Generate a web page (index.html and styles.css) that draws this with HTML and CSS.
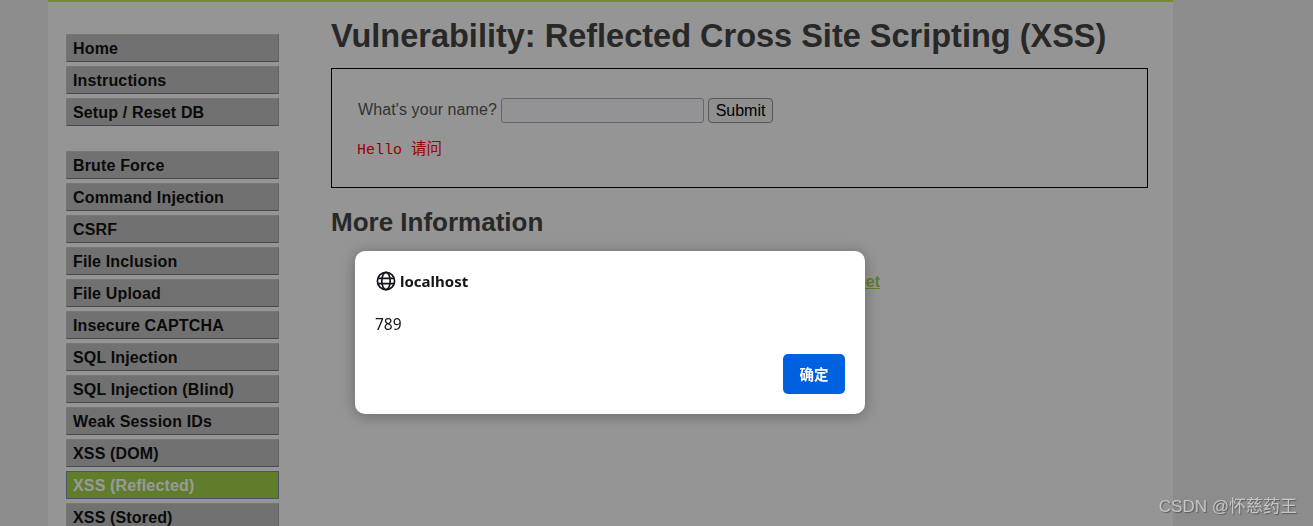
FILE: index.html
```html
<!DOCTYPE html>
<html lang="en">
<head>
    <meta charset="UTF-8">
    <meta name="viewport" content="width=device-width, initial-scale=1.0">
    <title>Vulnerability: Reflected Cross Site Scripting (XSS)</title>
    <link rel="stylesheet" href="styles.css">
</head>
<body>
    <div class="container">
        <div class="sidebar">
            <ul class="menu-block">
                <li><a href="#">Home</a></li>
                <li><a href="#">Instructions</a></li>
                <li><a href="#">Setup / Reset DB</a></li>
            </ul>
            <ul class="menu-block">
                <li><a href="#">Brute Force</a></li>
                <li><a href="#">Command Injection</a></li>
                <li><a href="#">CSRF</a></li>
                <li><a href="#">File Inclusion</a></li>
                <li><a href="#">File Upload</a></li>
                <li><a href="#">Insecure CAPTCHA</a></li>
                <li><a href="#">SQL Injection</a></li>
                <li><a href="#">SQL Injection (Blind)</a></li>
                <li><a href="#">Weak Session IDs</a></li>
                <li><a href="#">XSS (DOM)</a></li>
                <li class="selected"><a href="#">XSS (Reflected)</a></li>
                <li><a href="#">XSS (Stored)</a></li>
            </ul>
        </div>

        <div class="main">
            <h1>Vulnerability: Reflected Cross Site Scripting (XSS)</h1>
            <div class="vulnerable-code">
                <form class="name-form">
                    <label for="name-input">What's your name?</label>
                    <input type="text" id="name-input">
                    <button type="button" class="submit-btn">Submit</button>
                </form>
                <pre class="result">Hello <span class="result-cjk">请问</span></pre>
            </div>
            <h2>More Information</h2>
            <ul class="info-links">
                <li><a href="#">https://owasp.org/www-community/xss-filter-evasion-cheatsheet</a></li>
            </ul>
        </div>
    </div>

    <div class="overlay"></div>

    <div class="dialog">
        <div class="dialog-title">
            <svg class="globe" width="20" height="20" viewBox="0 0 20 20" fill="none" stroke="#15141a" stroke-width="1.7">
                <circle cx="10" cy="10" r="8.6"/>
                <ellipse cx="10" cy="10" rx="4.2" ry="8.6"/>
                <path d="M1.8 7.3h16.4M1.8 12.7h16.4"/>
            </svg>
            <span>localhost</span>
        </div>
        <div class="dialog-message">789</div>
        <div class="dialog-actions">
            <button type="button" class="ok-btn">确定</button>
        </div>
    </div>

    <div class="watermark">CSDN @怀慈药王</div>
</body>
</html>
```

FILE: styles.css
```css
html, body {
    height: 100%;
}

body {
    margin: 0;
    overflow: hidden;
    background-color: #e9e9e9;
    font-family: "Liberation Sans", Arial, sans-serif;
    font-size: 16px;
    color: #555;
}

.container {
    display: flex;
    width: 1125px;
    height: 100%;
    margin-left: 48px;
    background-color: #f8f8f9;
    border-top: 2px solid #c5ec4f;
    box-sizing: border-box;
}

.sidebar {
    width: 283px;
    padding: 32px 0 0 18px;
    box-sizing: border-box;
    flex-shrink: 0;
}

.menu-block {
    list-style: none;
    margin: 0 0 25px 0;
    padding: 0;
}

.menu-block li {
    margin-bottom: 4px;
}

.menu-block a {
    display: block;
    width: 213px;
    height: 28px;
    padding-left: 6px;
    box-sizing: border-box;
    background-color: #bcbcbc;
    border: 1px solid #c6c6c6;
    border-bottom-color: #7c7c8c;
    border-right-color: #a6a6ae;
    font-weight: bold;
    letter-spacing: 0.15px;
    line-height: 27px;
    color: #111;
    text-decoration: none;
}

.menu-block .selected a {
    background-color: #a0d048;
    border-color: #7f8ca8;
    color: #fff;
}

.main {
    width: 817px;
}

.main h1 {
    margin: 16px 0 0 0;
    font-size: 32.5px;
    line-height: 37px;
    font-weight: bold;
    white-space: nowrap;
    color: #444;
}

.vulnerable-code {
    height: 120px;
    margin-top: 13px;
    padding: 29px 26px 0 26px;
    box-sizing: border-box;
    border: 1px solid #000;
}

.name-form {
    display: flex;
    align-items: center;
    height: 25px;
    gap: 4px;
}

.name-form label {
    margin-bottom: 2px;
    letter-spacing: 0.1px;
}

.name-form input {
    width: 203px;
    height: 25px;
    padding: 0 2px;
    box-sizing: border-box;
    background-color: #f6f6fb;
    border: 1px solid #a8a8b4;
    border-radius: 3px;
}

.submit-btn {
    width: 65px;
    height: 25px;
    padding: 0;
    background-color: #efefef;
    border: 1px solid #8f8f9d;
    border-radius: 4px;
    font-family: "Liberation Sans", Arial, sans-serif;
    font-size: 16px;
    color: #000;
}

.result {
    margin: 17px 0 0 -1px;
    font-family: "Liberation Mono", "Noto Sans CJK SC", monospace;
    font-size: 15px;
    line-height: 20px;
    color: #ff0000;
}

.result-cjk {
    font-size: 15.5px;
}

.main h2 {
    margin: 19px 0 0 0;
    font-size: 26px;
    line-height: 30px;
    color: #444;
}

/* the link runs on behind the dialog, only its tail shows */
.info-links {
    list-style: none;
    width: 549px;
    margin: 36px 0 0 0;
    padding: 0;
    text-align: right;
    white-space: nowrap;
}

.info-links a {
    font-weight: bold;
    color: #a3d04a;
}

.overlay {
    position: fixed;
    top: 0;
    left: 0;
    right: 0;
    bottom: 0;
    background-color: rgba(0, 0, 0, 0.4);
}

.dialog {
    position: fixed;
    top: 251px;
    left: 355px;
    width: 510px;
    height: 163px;
    padding: 20px;
    box-sizing: border-box;
    background-color: #fff;
    border-radius: 10px;
    box-shadow: 0 2px 16px rgba(0, 0, 0, 0.3);
    font-family: "Noto Sans", "Noto Sans CJK SC", sans-serif;
    color: #15141a;
    display: flex;
    flex-direction: column;
}

.dialog-title {
    display: flex;
    align-items: center;
    gap: 4px;
    height: 20px;
    padding-left: 1px;
    font-size: 15px;
    font-weight: bold;
}

.dialog-message {
    margin-top: 23px;
    font-size: 15.5px;
    line-height: 20px;
}

.dialog-actions {
    display: flex;
    justify-content: flex-end;
    margin-top: 20px;
}

.ok-btn {
    width: 62px;
    height: 40px;
    padding: 0 0 2px 0;
    background-color: #0061e0;
    border: none;
    border-radius: 5px;
    font-family: "Noto Sans CJK SC", sans-serif;
    font-size: 14.5px;
    font-weight: bold;
    color: #fff;
}

.watermark {
    position: fixed;
    right: 16px;
    bottom: 7px;
    font-family: "Liberation Sans", "Noto Sans CJK SC", sans-serif;
    font-size: 17px;
    line-height: 24px;
    color: #c6c6c6;
    text-shadow: 1px 1px 1px #5a5a5a;
}
```
